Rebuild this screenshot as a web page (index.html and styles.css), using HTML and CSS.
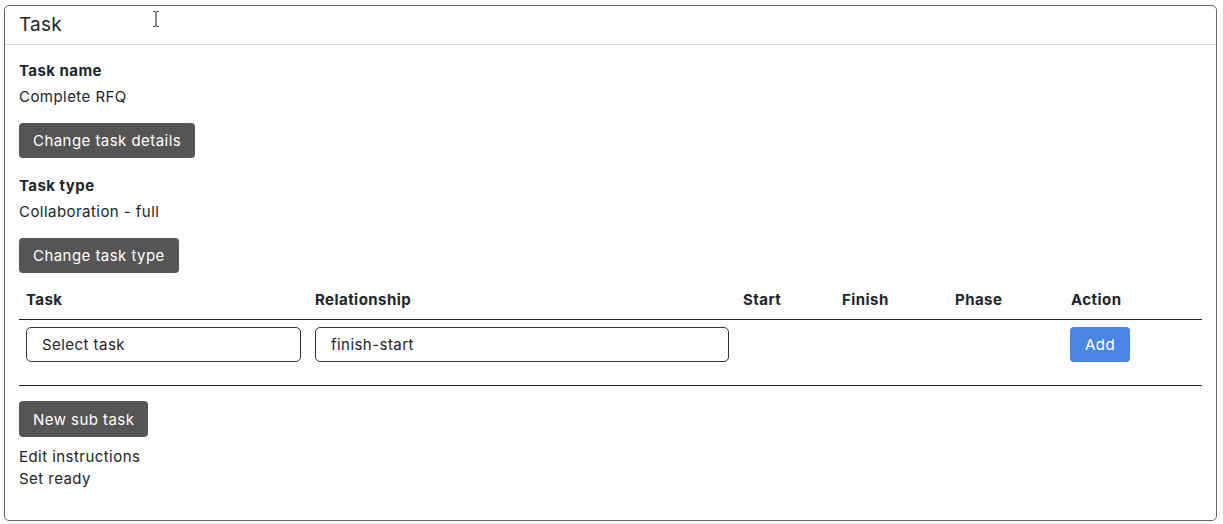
FILE: index.html
```html
<!DOCTYPE html>
<html lang="en">
<head>
<meta charset="utf-8">
<title>Task</title>
<link rel="stylesheet" href="styles.css">
</head>
<body>
<div class="card">
  <div class="card-header">Task</div>
  <div class="card-body">
    <div class="label">Task name</div>
    <div class="value">Complete RFQ</div>
    <button class="btn btn-dark">Change task details</button>
    <div class="label label-next">Task type</div>
    <div class="value">Collaboration - full</div>
    <button class="btn btn-dark">Change task type</button>
    <table class="deps">
      <colgroup>
        <col class="c-task"><col class="c-rel"><col class="c-start"><col class="c-finish"><col class="c-phase"><col class="c-action">
      </colgroup>
      <thead>
        <tr><th>Task</th><th>Relationship</th><th>Start</th><th>Finish</th><th>Phase</th><th>Action</th></tr>
      </thead>
      <tbody>
        <tr>
          <td><div class="select">Select task</div></td>
          <td><div class="select">finish-start</div></td>
          <td></td>
          <td></td>
          <td></td>
          <td><button class="btn btn-blue">Add</button></td>
        </tr>
      </tbody>
    </table>
    <hr class="rule">
    <button class="btn btn-dark btn-tall">New sub task</button>
    <div class="links">
      <div>Edit instructions</div>
      <div>Set ready</div>
    </div>
  </div>
</div>
<svg class="cursor" width="8" height="18" viewBox="0 0 8 18" aria-hidden="true">
  <path d="M1 1.5h2M5 1.5h2M4 2v14M1 16.5h2M5 16.5h2M3 2h2M3 16h2" stroke="#444" stroke-width="1.2" fill="none"/>
</svg>
</body>
</html>
```
FILE: styles.css
```css
html, body {
  margin: 0;
  padding: 0;
  background: #fff;
}
body {
  font-family: Inter, "Open Sans", sans-serif;
  color: #212529;
  font-size: 15px;
  letter-spacing: 0.45px;
}
.card {
  margin: 5px 6px 0 4px;
  height: 514px;
  border: 1px solid #666;
  border-radius: 5px;
  box-sizing: content-box;
}
.card-header {
  height: 38px;
  line-height: 38px;
  padding: 0 14px;
  font-size: 19px;
  border-bottom: 1px solid #d6d6d6;
  letter-spacing: 0.2px;
}
.card-body {
  padding: 15px 14px 0 14px;
}
.label {
  font-weight: 700;
  line-height: 21px;
}
.label-next {
  margin-top: 17px;
}
.value {
  line-height: 21px;
  margin-top: 5px;
  margin-bottom: 16px;
}
.btn {
  display: block;
  font-family: inherit;
  font-size: 15px;
  letter-spacing: 0.45px;
  height: 35px;
  border: none;
  border-radius: 4px;
  color: #fff;
  padding: 0 14px;
  cursor: pointer;
}
.btn-tall {
  height: 36px;
}
.btn-dark {
  background: #555555;
}
.btn-blue {
  background: #4a86e8;
  padding: 0;
  width: 60px;
}
.deps {
  width: 100%;
  table-layout: fixed;
  border-collapse: collapse;
  margin-top: 8px;
}
.c-task { width: 289px; }
.c-rel { width: 428px; }
.c-start { width: 99px; }
.c-finish { width: 113px; }
.c-phase { width: 116px; }
.c-action { width: 138px; }
.deps th {
  text-align: left;
  font-weight: 700;
  line-height: 21px;
  padding: 8px 7px 9px 7px;
  border-bottom: 1px solid #222;
}
.deps td {
  padding: 7px 7px 7px 7px;
  vertical-align: top;
}
.deps td:last-child {
  padding-left: 6px;
}
.select {
  height: 33px;
  line-height: 33px;
  border: 1px solid #333;
  border-radius: 5px;
  padding: 0 15px;
}
.rule {
  border: none;
  border-top: 1px solid #222;
  margin: 16px 0 15px 0;
  height: 0;
}
.links {
  margin-top: 9px;
  line-height: 22px;
}
.cursor {
  position: absolute;
  left: 152px;
  top: 10px;
}
```
